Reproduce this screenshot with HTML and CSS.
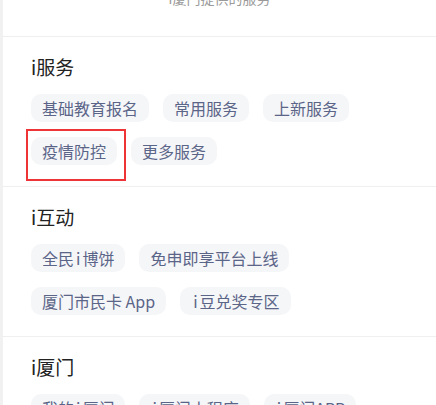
FILE: index.html
```html
<!DOCTYPE html>
<html lang="zh-CN">
<head>
<meta charset="utf-8">
<link rel="stylesheet" href="styles.css">
</head>
<body>
<div class="page">
  <div class="caption">i厦门提供的服务</div>
  <section class="group">
    <h2 class="title">i服务</h2>
    <div class="chips">
      <span class="chip">基础教育报名</span>
      <span class="chip">常用服务</span>
      <span class="chip">上新服务</span>
      <span class="chip marked">疫情防控</span>
      <span class="chip">更多服务</span>
    </div>
  </section>
  <section class="group">
    <h2 class="title">i互动</h2>
    <div class="chips">
      <span class="chip">全民<span class="i">i</span>博饼</span>
      <span class="chip">免申即享平台上线</span>
      <span class="chip">厦门市民卡 App</span>
      <span class="chip"><span class="i">i</span>豆兑奖专区</span>
    </div>
  </section>
  <section class="group">
    <h2 class="title">i厦门</h2>
    <div class="chips">
      <span class="chip">我的<span class="i">i</span>厦门</span>
      <span class="chip"><span class="i">i</span>厦门小程序</span>
      <span class="chip"><span class="i">i</span>厦门APP</span>
    </div>
  </section>
</div>
</body>
</html>
```

FILE: styles.css
```css
html, body {
  margin: 0;
  padding: 0;
  background: #ffffff;
  overflow: hidden;
}
body {
  font-family: "Noto Sans CJK SC", "Noto Sans", sans-serif;
}
.page {
  border-left: 3px solid #f1f1f1;
  min-height: 405px;
}
.caption {
  margin-top: -12px;
  height: 48px;
  line-height: 20px;
  font-size: 14px;
  color: #9a9a9a;
  text-align: center;
  border-bottom: 1px solid #efefef;
}
.group {
  padding: 17px 10px 21px 28px;
  border-bottom: 1px solid #efefef;
}
.title {
  margin: 0 0 14px;
  font-size: 19px;
  line-height: 26px;
  font-weight: 400;
  color: #222222;
}
.chips {
  display: flex;
  flex-wrap: wrap;
  gap: 15px 14px;
}
.chip {
  position: relative;
  display: inline-block;
  height: 28px;
  line-height: 28px;
  padding: 0 11px;
  font-size: 16px;
  color: #5b6588;
  background: #f5f6f8;
  border-radius: 10px;
  white-space: nowrap;
}
.chip .i {
  margin: 0 2px;
}
.chip.marked::after {
  content: "";
  position: absolute;
  left: -5px;
  top: -8px;
  width: 96px;
  height: 48px;
  border: 2px solid #ef3438;
}
```
